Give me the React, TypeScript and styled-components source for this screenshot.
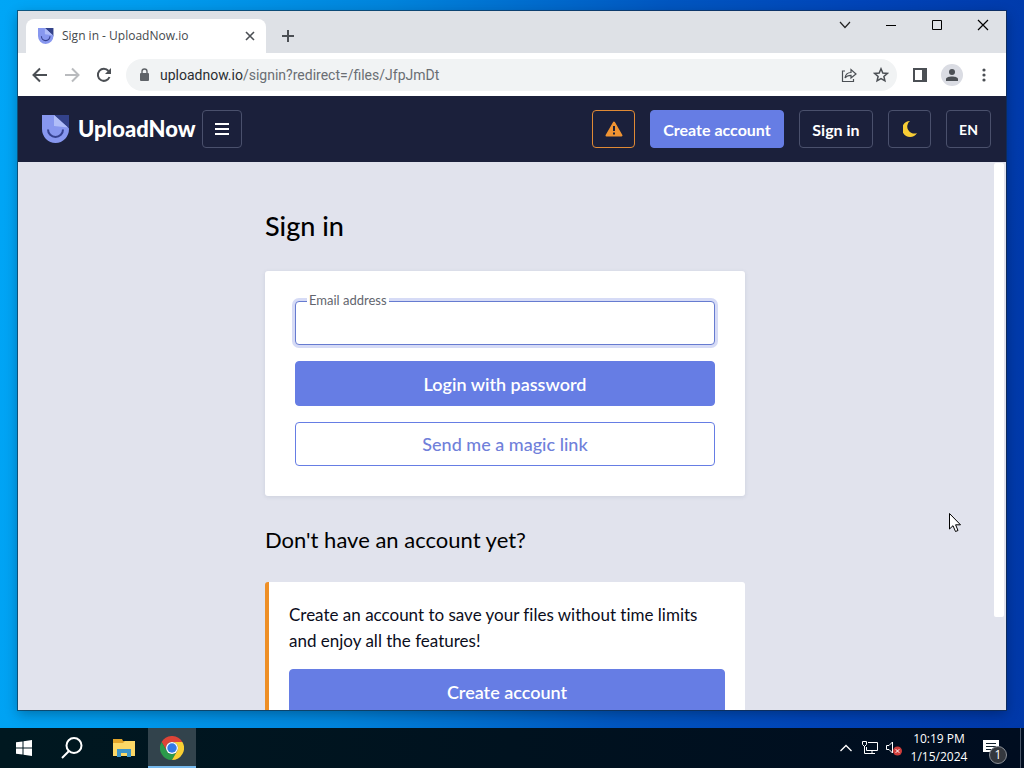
import React from "react";
import styled, { createGlobalStyle, css } from "styled-components";

const GlobalStyle = createGlobalStyle`
  * { box-sizing: border-box; }
  body { margin: 0; font-family: Lato, sans-serif; font-variant-ligatures: none; color: #0b0d1c; }
  button, input { font-family: inherit; margin: 0; }
`;

const system = `"Open Sans", "Noto Sans", sans-serif`;

const Desktop = styled.div`
  height: 100vh;
  display: flex;
  flex-direction: column;
  position: relative;
  overflow: hidden;
  background: linear-gradient(94deg, #00a6f6 0%, #009cee 14%, #0084dc 36%, #0056c0 62%, #0044b8 80%, #0038a8 100%);
`;

const Workspace = styled.div`
  flex: 1;
  min-height: 0;
  display: flex;
  padding: 11px 18px 18px;
`;

const Window = styled.section`
  flex: 1;
  min-width: 0;
  display: flex;
  flex-direction: column;
  background: #e1e3ed;
  box-shadow: 0 0 0 1px rgba(20, 40, 60, 0.6), 0 4px 12px rgba(0, 0, 0, 0.3);
`;

const TabStrip = styled.div`
  height: 42px;
  flex: none;
  display: flex;
  background: #dee1e6;
  padding-left: 8px;
`;

const Tab = styled.div`
  width: 240px;
  height: 34px;
  margin-top: 8px;
  display: flex;
  align-items: center;
  gap: 8px;
  padding: 0 10px 0 12px;
  border-radius: 8px 8px 0 0;
  background: #fff;
  font: 12px/16px ${system};
  color: #45494d;
`;

const TabTitle = styled.span`
  flex: 1;
  white-space: nowrap;
`;

const IconButton = styled.button<{ $w?: number; $h?: number }>`
  width: ${(p) => p.$w ?? 32}px;
  height: ${(p) => p.$h ?? 32}px;
  flex: none;
  display: flex;
  align-items: center;
  justify-content: center;
  padding: 0;
  border: 0;
  background: none;
  color: #4b4f54;
`;

const NewTab = styled(IconButton)`
  margin: 9px 0 0 6px;
`;

const WindowControls = styled.div`
  margin-left: auto;
  display: flex;
`;

const Toolbar = styled.div`
  height: 43px;
  flex: none;
  display: flex;
  align-items: center;
  padding: 0 6px;
  background: #fff;
`;

const Address = styled.div`
  flex: 1;
  height: 32px;
  margin: 0 7px 0 6px;
  display: flex;
  align-items: center;
  padding-left: 12px;
  border-radius: 16px;
  background: #f1f3f4;
`;

const Url = styled.div`
  flex: 1;
  padding-left: 10px;
  font: 14px/20px Roboto, sans-serif;
  color: #6a6e73;
  white-space: nowrap;
  b { font-weight: 400; color: #2b2e32; }
`;

const Header = styled.header`
  height: 66px;
  flex: none;
  display: flex;
  align-items: center;
  padding: 0 15px 0 24px;
  background: #1b203b;
`;

const Brand = styled.a`
  display: flex;
  align-items: center;
  gap: 8px;
  margin-right: 6px;
  color: #fff;
  font-size: 22px;
  line-height: 28px;
  font-weight: 900;
  text-decoration: none;
`;

const Actions = styled.nav`
  margin-left: auto;
  display: flex;
  gap: 15px;
`;

const HeaderButton = styled.button<{ $w: number; $tone?: "primary" | "warning" }>`
  width: ${(p) => p.$w}px;
  height: 38px;
  display: flex;
  align-items: center;
  justify-content: center;
  padding: 0;
  border: 1px solid #4a506c;
  border-radius: 4px;
  background: none;
  color: #fff;
  font-size: 16px;
  font-weight: 700;
  white-space: nowrap;
  ${(p) => p.$tone === "primary" && css`background: #667de4; border-color: #667de4;`}
  ${(p) => p.$tone === "warning" && css`border-color: #e08a35;`}
`;

const Language = styled(HeaderButton)`
  font-size: 14px;
`;

const Viewport = styled.div`
  flex: 1;
  min-height: 0;
  display: flex;
`;

const Page = styled.main`
  flex: 1;
  min-width: 0;
  overflow: hidden;
  display: flex;
  flex-direction: column;
  align-items: center;
`;

const Column = styled.div`
  width: 100%;
  max-width: 480px;
`;

const ScrollTrack = styled.div`
  width: 14px;
  flex: none;
  padding: 1px 2px 0;
`;

const ScrollThumb = styled.div`
  height: 83%;
  border-radius: 2px;
  background: #fff;
`;

const Title = styled.h1`
  margin: 48px 0 29px;
  font-size: 27px;
  line-height: 32px;
  font-weight: 500;
  color: #000;
`;

const Subtitle = styled.h2`
  margin: 30px 0 28px;
  font-size: 22px;
  line-height: 28px;
  font-weight: 400;
  color: #000;
`;

const Card = styled.form`
  display: flex;
  flex-direction: column;
  gap: 16px;
  padding: 30px;
  border-radius: 3px;
  background: #fff;
  box-shadow: 0 1px 4px rgba(60, 70, 110, 0.12);
`;

const Promo = styled.section`
  padding: 20px;
  border-left: 4px solid #ee8f26;
  border-radius: 3px;
  background: #fff;
`;

const PromoText = styled.p`
  margin: 0 0 15px;
  font-size: 17px;
  line-height: 26px;
`;

const Field = styled.div`
  position: relative;
  height: 44px;
`;

const FieldLabel = styled.label`
  position: absolute;
  left: 12px;
  top: -9px;
  padding: 0 2px;
  background: #fff;
  font-size: 13px;
  line-height: 16px;
  color: #62656e;
`;

const Input = styled.input`
  display: block;
  width: 100%;
  height: 44px;
  padding: 0 14px;
  border: 1px solid #667bd0;
  border-radius: 4px;
  outline: 0;
  background: #fff;
  box-shadow: 0 0 0 3px #d6dbf6;
  font-size: 16px;
`;

const WideButton = styled.button<{ $outline?: boolean }>`
  width: 100%;
  height: ${(p) => (p.$outline ? 44 : 45)}px;
  border: 1px solid #667de4;
  border-radius: 4px;
  background: ${(p) => (p.$outline ? "#fff" : "#667de4")};
  color: ${(p) => (p.$outline ? "#7080da" : "#fff")};
  font-size: 18px;
  font-weight: ${(p) => (p.$outline ? 500 : 600)};
`;

const Taskbar = styled.footer`
  height: 40px;
  flex: none;
  display: flex;
  background: linear-gradient(90deg, #001820, #00121f 50%, #000d20);
  color: #fff;
`;

const TaskButton = styled(IconButton)<{ $active?: boolean }>`
  width: 48px;
  height: 40px;
  color: #fff;
  ${(p) => p.$active && css`background: #32434c; border-bottom: 2px solid #76b9ed; padding-top: 2px;`}
`;

const PinnedApps = styled.div`
  display: flex;
  margin-left: 4px;
`;

const Tray = styled.div`
  margin-left: auto;
  display: flex;
  align-items: center;
`;

const Clock = styled.div`
  width: 66px;
  font: 12px/18px ${system};
  text-align: center;
  white-space: nowrap;
`;

const Notifications = styled(IconButton)`
  width: 48px;
  height: 40px;
  position: relative;
  justify-content: flex-start;
  padding-left: 11px;
  color: #fff;
`;

const Badge = styled.span`
  position: absolute;
  left: 17px;
  top: 18px;
  width: 18px;
  height: 18px;
  border: 1px solid #8a8f96;
  border-radius: 50%;
  background: #34383e;
  font: 12px/16px ${system};
  text-align: center;
`;

const ShowDesktop = styled.button`
  width: 4px;
  height: 40px;
  padding: 0;
  border: 0;
  border-left: 1px solid #4a5668;
  background: none;
`;

const Pointer = styled.svg`
  position: absolute;
  left: 949px;
  top: 513px;
`;

const Logo = ({ size }: { size: number }) => (
  <svg width={size} height={size} viewBox="0 0 28 28" aria-hidden="true">
    <path d="M11 0H27V15Z" fill="#33428a" />
    <path d="M0 0H12L27 13.500A13.500 14 0 0 1 13.500 28A13.500 14 0 0 1 0 14Z" fill="#8797ef" />
    <path d="M12 0L26 12.500L12 11Z" fill="#b0bdf8" />
    <path d="M6 14.500A7.500 7.500 0 0 0 21 14.500" fill="none" stroke="#35418f" strokeWidth="2" />
  </svg>
);

const stroke = (width: number) => ({ fill: "none", stroke: "currentColor", strokeWidth: width });

export default function App() {
  return (
    <>
      <GlobalStyle />
      <Desktop>
        <Workspace>
          <Window>
            <TabStrip>
              <Tab>
                <Logo size={16} />
                <TabTitle>Sign in - UploadNow.io</TabTitle>
                <IconButton $w={12} $h={16} aria-label="Close tab">
                  <svg width="10" height="10" {...stroke(1.6)}><path d="M1 1L9 9M9 1L1 9" /></svg>
                </IconButton>
              </Tab>
              <NewTab aria-label="New tab">
                <svg width="14" height="14" {...stroke(2)}><path d="M7 1V13M1 7H13" /></svg>
              </NewTab>
              <WindowControls>
                <IconButton $w={46} $h={28} aria-label="Search tabs">
                  <svg width="12" height="8" fill="none" stroke="#222" strokeWidth="1.200"><path d="M1 1L6 6.500L11 1" /></svg>
                </IconButton>
                <IconButton $w={46} $h={28} aria-label="Minimize">
                  <svg width="10" height="10" stroke="#000"><path d="M0 5.500H10" /></svg>
                </IconButton>
                <IconButton $w={46} $h={28} aria-label="Maximize">
                  <svg width="10" height="10" stroke="#000" fill="none"><path d="M.5.5H9.500V9.500H.5Z" /></svg>
                </IconButton>
                <IconButton $w={46} $h={28} aria-label="Close">
                  <svg width="12" height="12" stroke="#000" strokeWidth="1.200"><path d="M1 1L11 11M11 1L1 11" /></svg>
                </IconButton>
              </WindowControls>
            </TabStrip>
            <Toolbar>
              <IconButton aria-label="Back">
                <svg width="16" height="16" {...stroke(2)}><path d="M15 8H2M8 1.500L1.500 8L8 14.500" /></svg>
              </IconButton>
              <IconButton aria-label="Forward">
                <svg width="16" height="16" fill="none" stroke="#b9bbbe" strokeWidth="2"><path d="M1 8H14M8 1.500L14.500 8L8 14.500" /></svg>
              </IconButton>
              <IconButton aria-label="Reload">
                <svg width="16" height="16" {...stroke(2)}>
                  <path d="M13.500 10A6 6 0 1 1 12.500 4" />
                  <path d="M15 1V7H9Z" fill="currentColor" stroke="none" />
                </svg>
              </IconButton>
              <Address>
                <svg width="12" height="14" viewBox="0 0 12 14" aria-hidden="true">
                  <rect x="2" y="5" width="9" height="8" rx="1" fill="#5f6368" />
                  <path d="M4 5V3.500A2.500 2.500 0 0 1 9 3.500V5" fill="none" stroke="#5f6368" strokeWidth="1.400" />
                </svg>
                <Url><b>uploadnow.io</b>/signin?redirect=/files/JfpJmDt</Url>
                <IconButton aria-label="Share">
                  <svg width="16" height="16" {...stroke(1.2)}>
                    <path d="M4 4H1.500V14.500H12.500V12" />
                    <path d="M4 11C4.500 7.500 6.500 5.500 10 5.500V2.500L15 7L10 11V8.300C7.500 8.300 5.500 9 4 11Z" />
                  </svg>
                </IconButton>
                <IconButton aria-label="Bookmark">
                  <svg width="16" height="16" {...stroke(1.5)}><path d="M8 1.800L9.800 6L14.300 6.400L10.900 9.400L11.900 13.800L8 11.500L4.100 13.800L5.100 9.400L1.700 6.400L6.200 6Z" /></svg>
                </IconButton>
              </Address>
              <IconButton aria-label="Side panel">
                <svg width="14" height="14"><path d="M1 1H13V13H1Z" {...stroke(2)} /><path d="M9 0H14V14H9Z" fill="currentColor" /></svg>
              </IconButton>
              <IconButton aria-label="Profile">
                <svg width="22" height="22">
                  <circle cx="11" cy="11" r="11" fill="#dadce3" />
                  <circle cx="11" cy="8" r="3" fill="currentColor" />
                  <path d="M5 17V15C5 11.500 17 11.500 17 15V17Z" fill="currentColor" />
                </svg>
              </IconButton>
              <IconButton aria-label="Menu">
                <svg width="4" height="14" fill="currentColor"><circle cx="2" cy="2" r="1.600" /><circle cx="2" cy="7" r="1.600" /><circle cx="2" cy="12" r="1.600" /></svg>
              </IconButton>
            </Toolbar>
            <Header>
              <Brand href="#"><Logo size={28} />UploadNow</Brand>
              <HeaderButton $w={40} aria-label="Open menu">
                <svg width="14" height="14" {...stroke(2)}><path d="M0 2H14M0 7H14M0 12H14" /></svg>
              </HeaderButton>
              <Actions>
                <HeaderButton $w={43} $tone="warning" aria-label="Report abuse">
                  <svg width="18" height="16" viewBox="0 0 18 16">
                    <path d="M9 1.500L16.500 14.500H1.500Z" fill="#f09433" stroke="#f09433" strokeWidth="2" strokeLinejoin="round" />
                    <path d="M9 5V10M9 11.500V13.500" stroke="#1b203b" strokeWidth="2" />
                  </svg>
                </HeaderButton>
                <HeaderButton $w={134} $tone="primary">Create account</HeaderButton>
                <HeaderButton $w={74}>Sign in</HeaderButton>
                <HeaderButton $w={43} aria-label="Dark mode">
                  <svg width="14" height="16"><path d="M7 0A8 8 0 1 0 14 12A7 7 0 0 1 7 0Z" fill="#f8cd35" /></svg>
                </HeaderButton>
                <Language $w={45}>EN</Language>
              </Actions>
            </Header>
            <Viewport>
              <Page>
                <Column>
                  <Title>Sign in</Title>
                  <Card>
                    <Field>
                      <Input id="email" type="email" />
                      <FieldLabel htmlFor="email">Email address</FieldLabel>
                    </Field>
                    <WideButton type="button">Login with password</WideButton>
                    <WideButton type="button" $outline>Send me a magic link</WideButton>
                  </Card>
                  <Subtitle>Don't have an account yet?</Subtitle>
                  <Promo>
                    <PromoText>Create an account to save your files without time limits and enjoy all the features!</PromoText>
                    <WideButton type="button">Create account</WideButton>
                  </Promo>
                </Column>
              </Page>
              <ScrollTrack><ScrollThumb /></ScrollTrack>
            </Viewport>
          </Window>
        </Workspace>
        <Taskbar>
          <TaskButton aria-label="Start">
            <svg width="16" height="16" fill="#fff"><path d="M0 2.300L6.500 1.400V7.500H0ZM7.500 1.200L16 0V7.500H7.500ZM0 8.500H6.500V14.600L0 13.700ZM7.500 8.500H16V16L7.500 14.800Z" /></svg>
          </TaskButton>
          <TaskButton aria-label="Search">
            <svg width="22" height="22" {...stroke(2)}><circle cx="13" cy="8.500" r="7.500" /><path d="M8 14L1 21" /></svg>
          </TaskButton>
          <PinnedApps>
            <TaskButton aria-label="File Explorer">
              <svg width="22" height="18">
                <path d="M0 0H9L10 2H21V17H0Z" fill="#e2a52b" />
                <path d="M0 4H10L12 2H22V17H0Z" fill="#fcd866" />
                <path d="M4 10H18V18H14V14H8V18H4Z" fill="#3d95c9" />
              </svg>
            </TaskButton>
            <TaskButton $active aria-label="Chrome">
              <svg width="24" height="24" viewBox="0 0 48 48">
                <path d="M24 12H44.800A24 24 0 0 0 3.200 12L13.600 30A12 12 0 0 1 24 12Z" fill="#dd4437" />
                <path d="M3.200 12A24 24 0 0 0 24 48L34.400 30A12 12 0 0 1 13.600 30Z" fill="#2b9a4b" />
                <path d="M24 48A24 24 0 0 0 44.800 12H24A12 12 0 0 1 34.400 30Z" fill="#f9cf33" />
                <circle cx="24" cy="24" r="12" fill="#fff" />
                <circle cx="24" cy="24" r="9.500" fill="#3279e6" />
              </svg>
            </TaskButton>
          </PinnedApps>
          <Tray>
            <IconButton $w={24} aria-label="Show hidden icons">
              <svg width="12" height="8" fill="none" stroke="#fff" strokeWidth="1.300"><path d="M.5 7L6 1.500L11.500 7" /></svg>
            </IconButton>
            <IconButton $w={24} aria-label="Network">
              <svg width="16" height="14" fill="none" stroke="#fff">
                <path d="M6 1.500H15.500V9.500H4.500V6M10 9.500V12.500M6 12.500H13" /><path d="M.5.500H4.500V3.500L2.500 5.500L.5 3.500ZM2.500 5V12.500H6" />
              </svg>
            </IconButton>
            <IconButton $w={24} aria-label="Volume">
              <svg width="16" height="16" viewBox="0 0 16 16">
                <path d="M.5 5.500H3L6.500 2V13L3 9.500H.5Z" fill="none" stroke="#fff" />
                <circle cx="11.500" cy="11" r="4.500" fill="#cf3d3b" />
                <path d="M9.700 9.200L13.300 12.800M13.300 9.200L9.700 12.800" stroke="#fff" />
              </svg>
            </IconButton>
            <Clock>10:19 PM<br />1/15/2024</Clock>
            <Notifications aria-label="Notifications">
              <svg width="16" height="16"><path d="M0 0H16V12H12V16L8 12H0Z" fill="#fff" /><path d="M3 3.500H13M3 6.500H13M3 9.500H9" stroke="#10202c" /></svg>
              <Badge>1</Badge>
            </Notifications>
            <ShowDesktop aria-label="Show desktop" />
          </Tray>
        </Taskbar>
        <Pointer width="12" height="20" viewBox="0 0 12 20" aria-hidden="true">
          <path d="M.5.500V16L4 12.700L6.500 18.500L9 17.500L6.600 11.800H11.500Z" fill="#fff" stroke="#000" />
        </Pointer>
      </Desktop>
    </>
  );
}
